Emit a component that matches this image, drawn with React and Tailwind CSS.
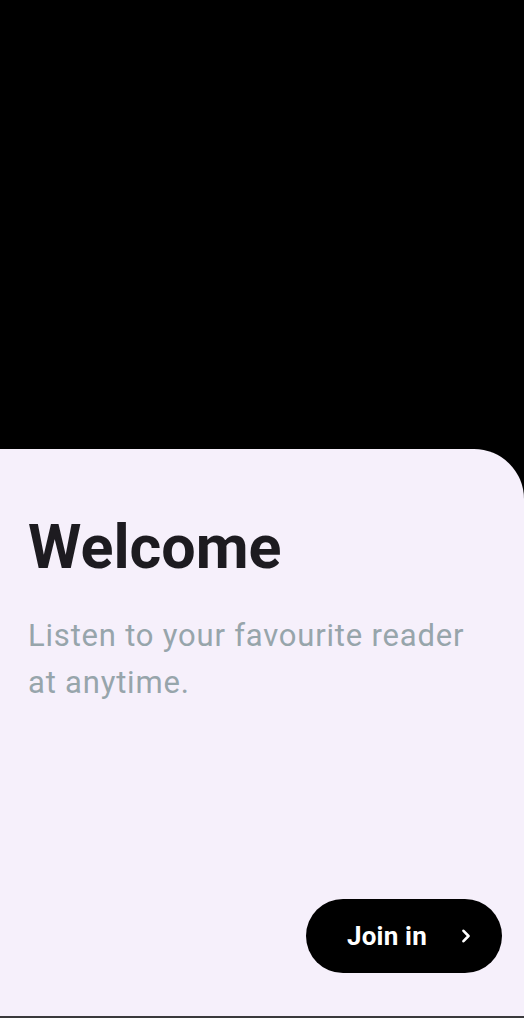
export default function App() {
  return (
    <div
      className="flex h-[1018px] w-full flex-col bg-black"
      style={{ fontFamily: "Roboto, 'Noto Sans', sans-serif" }}
    >
      <div className="h-[449px] shrink-0" />
      <div className="flex flex-1 flex-col rounded-tr-[50px] border-b-2 border-[#3a3a3c] bg-[#f6f0fb] px-[28px] pt-[68px]">
        <h1 className="text-[61px] leading-[60px] font-bold text-[#1d1b20]">Welcome</h1>
        <p className="mt-[35px] text-[31px] leading-[47px] tracking-[0.8px] text-[#97a5ab]">
          Listen to your favourite reader at anytime.
        </p>
        <div className="mt-auto mb-[43px] flex justify-end">
          <button
            type="button"
            className="-mr-[6px] flex h-[74px] w-[196px] items-center gap-[34px] rounded-full bg-black pl-[41px] text-white"
          >
            <span className="text-[26px] font-bold tracking-[0.2px]">Join in</span>
            <svg width="10" height="14" viewBox="0 0 10 14" fill="none" stroke="currentColor" strokeWidth="2.6" strokeLinecap="round" strokeLinejoin="round">
              <path d="M2.5 1.8l5 5.2-5 5.2" />
            </svg>
          </button>
        </div>
      </div>
    </div>
  );
}
